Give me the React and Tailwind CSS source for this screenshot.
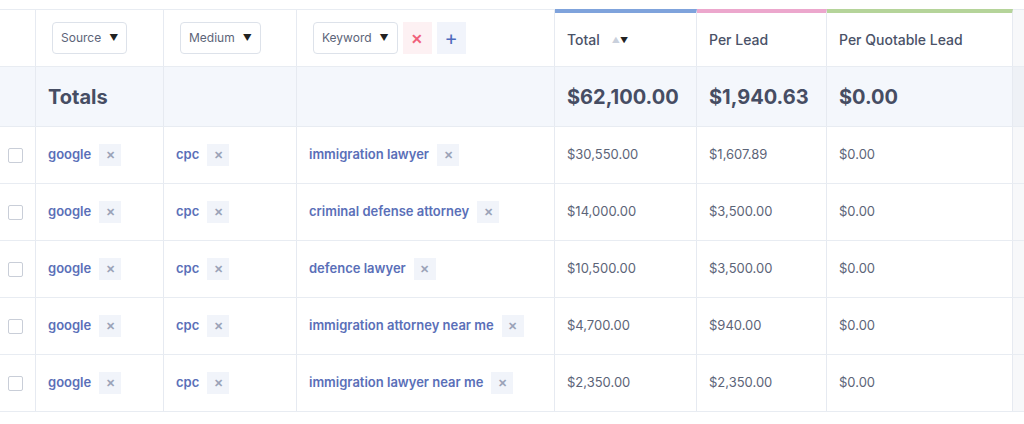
const cols = "grid grid-cols-[36px_128px_133px_258px_142px_130px_186px_1fr]";
const rows = [
  ["immigration lawyer", "$30,550.00", "$1,607.89"],
  ["criminal defense attorney", "$14,000.00", "$3,500.00"],
  ["defence lawyer", "$10,500.00", "$3,500.00"],
  ["immigration attorney near me", "$4,700.00", "$940.00"],
  ["immigration lawyer near me", "$2,350.00", "$2,350.00"],
];
const X = () => <span className="ml-2 inline-flex items-center justify-center w-[22px] h-[22px] bg-[#f1f4fa] text-[#9aa3b8] text-[11px]">✕</span>;
const Link = ({ t }) => <div className="flex items-center px-3 border-r border-[#e6eaf1] text-[13px] font-semibold text-[#5a6fb8]">{t}<X /></div>;
const Drop = ({ t }) => <div className="flex items-center gap-2 h-[32px] px-2 border border-[#dde2ea] rounded text-[12px] text-[#5c6478] bg-white">{t}<span className="text-[9px] text-[#222]">▼</span></div>;
export default function App() {
  return (
    <div className="w-[1024px] h-[424px] bg-white pt-[9px] overflow-hidden" style={{ fontFamily: "Inter, sans-serif" }}>
      <div className="border-t border-[#e8ecf2]">
        <div className={cols + " h-[57px] border-b border-[#e8ecf2]"}>
          <div className="border-r border-[#e6eaf1]" />
          <div className="flex items-center px-4 border-r border-[#e6eaf1]"><Drop t="Source" /></div>
          <div className="flex items-center px-4 border-r border-[#e6eaf1]"><Drop t="Medium" /></div>
          <div className="flex items-center gap-[5px] px-4 border-r border-[#e6eaf1]"><Drop t="Keyword" />
            <span className="w-[29px] h-[32px] bg-[#fdf1f3] text-[#f0607a] flex items-center justify-center text-[14px] font-bold">✕</span>
            <span className="w-[29px] h-[32px] bg-[#f1f4fb] text-[#4e6bbd] flex items-center justify-center text-[20px]">+</span>
          </div>
          <div className="flex items-center px-3 border-r border-[#e6eaf1] border-t-4 border-t-[#7fa3dc] text-[14px] font-medium text-[#4a5268] -mt-px">Total <span className="ml-3 text-[8px] text-[#c9d0dc]">▲</span><span className="text-[8px] text-[#222]">▼</span></div>
          <div className="flex items-center px-3 border-r border-[#e6eaf1] border-t-4 border-t-[#eca7cd] text-[14px] font-medium text-[#4a5268] -mt-px">Per Lead</div>
          <div className="flex items-center px-3 border-r border-[#e6eaf1] border-t-4 border-t-[#b5d49a] text-[14px] font-medium text-[#4a5268] -mt-px">Per Quotable Lead</div>
          <div className="bg-[#f7f8fa]" />
        </div>
        <div className={cols + " h-[60px] bg-[#f4f7fc] border-b border-[#e8ecf2] text-[20px] font-bold text-[#464d63]"}>
          <div className="border-r border-[#e6eaf1]" />
          <div className="flex items-center px-3 border-r border-[#e6eaf1]">Totals</div>
          <div className="border-r border-[#e6eaf1]" />
          <div className="border-r border-[#e6eaf1]" />
          <div className="flex items-center px-3 border-r border-[#e6eaf1]">$62,100.00</div>
          <div className="flex items-center px-3 border-r border-[#e6eaf1]">$1,940.63</div>
          <div className="flex items-center px-3 border-r border-[#e6eaf1]">$0.00</div>
          <div className="bg-[#eef1f6]" />
        </div>
        {rows.map((r, i) => (
          <div key={i} className={cols + " h-[57px] border-b border-[#e8ecf2] text-[13px] text-[#5c6478]"}>
            <div className="flex items-center pl-[8px] border-r border-[#e6eaf1]"><span className="w-[15px] h-[15px] border border-[#c9ced8] rounded-[2px]" /></div>
            <Link t="google" />
            <Link t="cpc" />
            <Link t={r[0]} />
            <div className="flex items-center px-3 border-r border-[#e6eaf1]">{r[1]}</div>
            <div className="flex items-center px-3 border-r border-[#e6eaf1]">{r[2]}</div>
            <div className="flex items-center px-3 border-r border-[#e6eaf1]">$0.00</div>
            <div className="bg-[#f7f8fa]" />
          </div>
        ))}
      </div>
    </div>
  );
}
